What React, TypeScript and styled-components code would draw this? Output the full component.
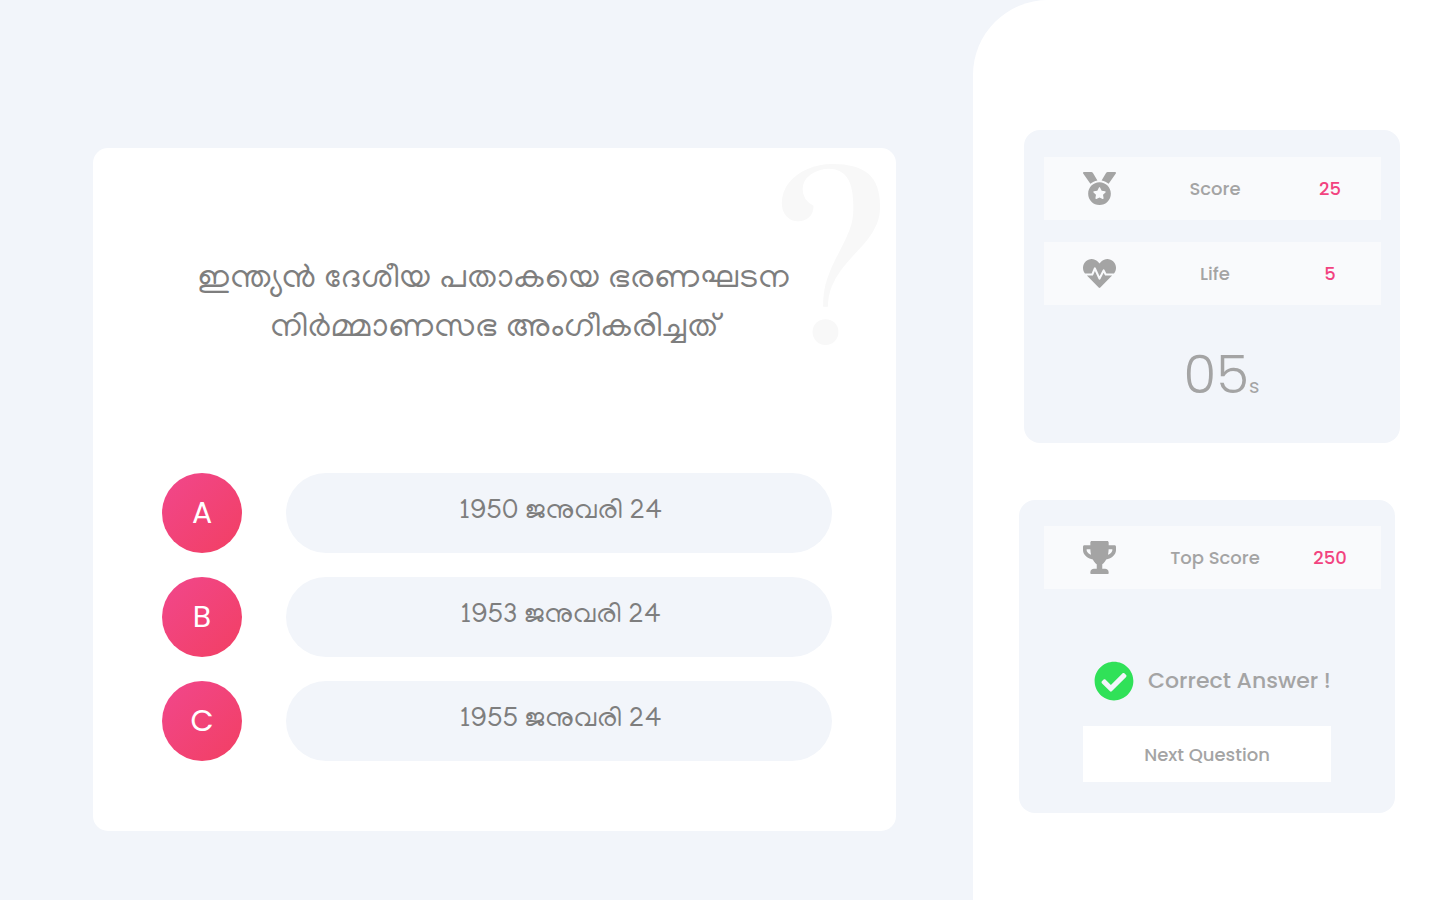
import React from "react";
import styled, { createGlobalStyle } from "styled-components";
import { FaCheckCircle, FaHeartbeat, FaMedal, FaTrophy } from "react-icons/fa";

const GlobalStyle = createGlobalStyle`
  * { box-sizing: border-box; }
  body {
    margin: 0;
    background: #f2f5fa;
    color: #a4a4a4;
    font-family: Poppins, Inter, "Noto Sans", sans-serif;
  }
  button { font: inherit; color: inherit; border: 0; cursor: pointer; }
`;

const Page = styled.div`
  display: grid;
  grid-template-columns: minmax(0, 973fr) minmax(0, 467fr);
  min-height: 100vh;
`;

const Main = styled.main`
  padding: 148px 77px 69px 93px;
  display: flex;
`;

const QuizCard = styled.section`
  position: relative;
  flex: 1;
  display: flex;
  flex-direction: column;
  justify-content: space-between;
  padding: 108px 64px 70px 69px;
  border-radius: 15px;
  background: #fff;
`;

const QuestionMark = styled.span`
  position: absolute;
  top: 17px;
  right: 7px;
  font-family: Prata, "Liberation Serif", serif;
  font-size: 218px;
  line-height: 220px;
  color: #f8f8f8;
`;

const Question = styled.h1`
  position: relative;
  margin: 0 6px 0 0;
  font-family: Manjari, "Noto Sans Malayalam", "Noto Sans", sans-serif;
  font-size: 34px;
  font-weight: 400;
  line-height: 49px;
  text-align: center;
  color: #7e7e7e;
`;

const Options = styled.div`
  display: flex;
  flex-direction: column;
  gap: 24px;
`;

const Option = styled.button`
  display: flex;
  gap: 44px;
  padding: 0;
  background: none;
`;

const Letter = styled.span`
  flex: none;
  width: 80px;
  height: 80px;
  border-radius: 50%;
  background: linear-gradient(135deg, #f1478c, #f23f63);
  font-size: 30px;
  font-weight: 400;
  line-height: 80px;
  text-align: center;
  color: #fff;
`;

const Answer = styled.span`
  flex: 1;
  height: 80px;
  padding-left: 4px;
  border-radius: 40px;
  background: #f2f5fa;
  font-family: Manjari, "Noto Sans Malayalam", Lato, "Noto Sans", sans-serif;
  font-size: 28px;
  line-height: 80px;
  text-align: center;
  color: #7e7e7e;
`;

const Side = styled.aside`
  display: flex;
  flex-direction: column;
  gap: 57px;
  padding: 130px 40px 87px 46px;
  border-top-left-radius: 75px;
  background: #fff;
`;

const Panel = styled.section<{ $shifted?: boolean }>`
  display: flex;
  flex-direction: column;
  min-height: 313px;
  margin: ${(p) => (p.$shifted ? "0 0 0 5px" : "0 5px 0 0")};
  padding: ${(p) => (p.$shifted ? "27px 19px 29px 20px" : "26px 14px 31px 25px")};
  border-radius: 16px;
  background: #f2f5fa;
`;

const Stat = styled.div`
  display: grid;
  grid-template-columns: 111fr 120fr 106fr;
  align-items: center;
  justify-items: center;
  height: 63px;
  background: #f9fafc;
  font-size: 18px;
  font-weight: 500;
  & + & { margin-top: 22px; }
`;

const StatValue = styled.strong`
  padding-left: 4px;
  font-weight: 500;
  color: #f24380;
`;

const Timer = styled.p`
  display: flex;
  justify-content: center;
  align-items: baseline;
  margin: auto 0 0 18px;
  font-size: 53px;
  font-weight: 300;
  line-height: 56px;
`;

const Unit = styled.span`
  font-size: 20px;
  font-weight: 400;
`;

const Result = styled.p`
  display: flex;
  align-items: center;
  gap: 14px;
  margin: auto 0 25px 50px;
  font-size: 22px;
  font-weight: 500;
  line-height: 40px;
  white-space: nowrap;
`;

const Next = styled.button`
  margin: 0 50px 0 39px;
  height: 56px;
  background: #fff;
  font-size: 18px;
  font-weight: 500;
`;

const answers = [
  { letter: "A", text: "1950 ജനുവരി 24" },
  { letter: "B", text: "1953 ജനുവരി 24" },
  { letter: "C", text: "1955 ജനുവരി 24" },
];

export default function App() {
  return (
    <>
      <GlobalStyle />
      <Page>
        <Main>
          <QuizCard>
            <QuestionMark aria-hidden="true">?</QuestionMark>
            <Question lang="ml">
              ഇന്ത്യൻ ദേശീയ പതാകയെ ഭരണഘടന
              <br />
              നിർമ്മാണസഭ അംഗീകരിച്ചത്
            </Question>
            <Options>
              {answers.map((a) => (
                <Option key={a.letter} type="button">
                  <Letter>{a.letter}</Letter>
                  <Answer lang="ml">{a.text}</Answer>
                </Option>
              ))}
            </Options>
          </QuizCard>
        </Main>
        <Side>
          <Panel $shifted>
            <Stat>
              <FaMedal size={33} />
              <span>Score</span>
              <StatValue>25</StatValue>
            </Stat>
            <Stat>
              <FaHeartbeat size={33} />
              <span>Life</span>
              <StatValue>5</StatValue>
            </Stat>
            <Timer>
              05<Unit>s</Unit>
            </Timer>
          </Panel>
          <Panel>
            <Stat>
              <FaTrophy size={33} preserveAspectRatio="none" />
              <span>Top Score</span>
              <StatValue>250</StatValue>
            </Stat>
            <Result role="status">
              <FaCheckCircle size={40} color="#30e158" />
              Correct Answer !
            </Result>
            <Next type="button">Next Question</Next>
          </Panel>
        </Side>
      </Page>
    </>
  );
}
